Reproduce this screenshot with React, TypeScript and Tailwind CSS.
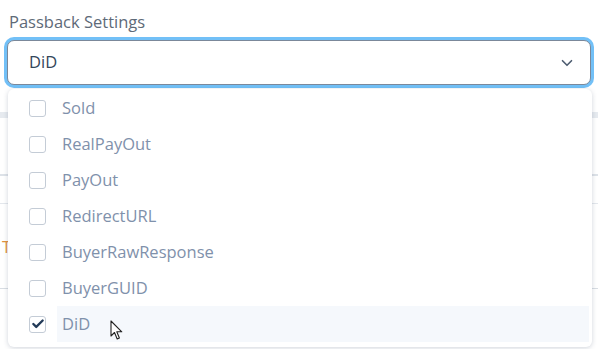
import { ChevronDown, Check } from 'lucide-react';

const options = ['Sold', 'RealPayOut', 'PayOut', 'RedirectURL', 'BuyerRawResponse', 'BuyerGUID', 'DiD'];

const Cursor = () => (
  <svg width="14" height="21" viewBox="0 0 14 21" className="absolute left-[110px] top-[320px]">
    <path d="M1 1 L1 16 L4.5 12.5 L7.2 19 L9.4 18 L6.8 11.8 L11.8 11.8 Z" fill="#fff" stroke="#222" strokeWidth="1.1" strokeLinejoin="round" />
  </svg>
);

const App = () => {
  const selected = 'DiD';

  return (
    <div className="relative w-[598px] h-[349px] bg-white overflow-hidden" style={{ fontFamily: '"Open Sans", Lato, sans-serif' }}>
      <div className="px-[7px] pt-[10px]">
        <label className="block pl-[2px] text-[16.5px] text-[#5e6a78] leading-[23px]">Passback Settings</label>

        <div className="mt-[7px] h-[45px] rounded-[7px] border border-[#7b889a] bg-white ring-[3px] ring-[#72c0f7] flex items-center justify-between pl-[21px] pr-[14px]">
          <span className="text-[16.5px] text-[#33475b]">{selected}</span>
          <ChevronDown className="h-[18px] w-[18px] text-[#4e5d71]" strokeWidth={2.2} />
        </div>
      </div>

      {/* page content hidden behind the open menu */}
      <div className="flex flex-col pt-[27px]">
        <div className="h-[6px] bg-[#e6eaef]" />
        <div className="h-[58px] border-b-2 border-[#dde2e8]" />
        <div className="h-[28px] border-b border-[#e3e7ec]" />
        <div className="h-[85px] border-b border-[#d8dde3] flex items-center pl-[2px] pt-[2px]">
          <span className="text-[16px] text-[#e0913f]">T</span>
        </div>
      </div>

      <ul className="absolute left-[8px] top-[89px] w-[584px] h-[258px] rounded-[6px] bg-white shadow-[0_1px_5px_rgba(40,60,90,0.22)] py-[1px]">
        {options.map((opt) => {
          const checked = opt === selected;
          return (
            <li key={opt} className="h-[36px] flex items-center pl-[21px] pr-[3px]">
              <span className="h-[17px] w-[17px] rounded-[3px] border border-[#c4ccd6] bg-white flex items-center justify-center shrink-0">
                {checked && <Check className="h-[14px] w-[14px] text-[#223a58]" strokeWidth={4} />}
              </span>
              <span className={`ml-[11px] flex-1 h-full flex items-center pl-[5px] text-[16.5px] text-[#7f91ab] ${checked ? 'bg-[#f5f8fc]' : ''}`}>
                {opt}
              </span>
            </li>
          );
        })}
      </ul>

      <Cursor />
    </div>
  );
};

export default App;
